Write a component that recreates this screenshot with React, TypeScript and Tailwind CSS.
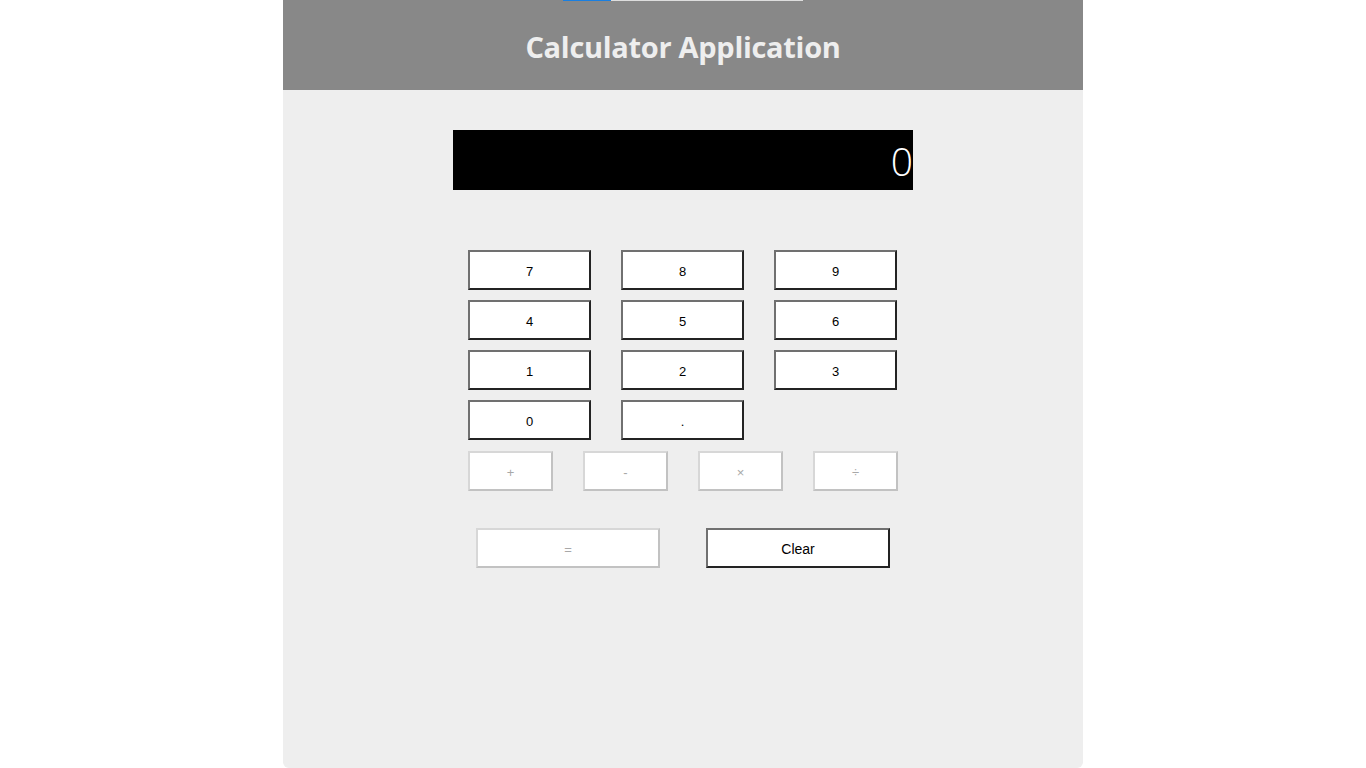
const digitRows = [
  ["7", "8", "9"],
  ["4", "5", "6"],
  ["1", "2", "3"],
  ["0", "."],
];

const operators = ["+", "-", "×", "÷"];

const btnOn =
  "h-10 pt-[3px] bg-white border-2 border-t-[#707070] border-l-[#707070] border-r-[#232323] border-b-[#232323] text-[13px] text-black";
const btnOff =
  "h-10 pt-[3px] bg-white border-2 border-t-[#d7d7d7] border-l-[#d7d7d7] border-r-[#c2c2c2] border-b-[#c2c2c2] text-[13px] text-[#a8a8a8]";

export default function App() {
  return (
    <div className="min-h-screen bg-white font-['Liberation_Sans',Arial,sans-serif]">
      <div className="mx-auto flex min-h-screen w-[800px] flex-col rounded-b-md bg-[#eeeeee]">
        <header className="relative flex h-[90px] items-center justify-center bg-[#888888] pt-1">
          <div className="absolute left-[280px] top-0 flex h-px w-[240px] bg-[#dddddd]">
            <div className="h-px w-[48px] bg-[#1a7fe0]" />
          </div>
          <h1 className="font-['Open_Sans',sans-serif] text-[29px] font-bold tracking-[-0.3px] text-[#eeeeee]">
            Calculator Application
          </h1>
        </header>

        <div className="flex flex-col items-center pt-10">
          <div className="flex h-[60px] w-[460px] items-center justify-end overflow-hidden bg-black">
            <span className="font-['Open_Sans',sans-serif] text-[39px] font-light leading-none text-white">
              0
            </span>
          </div>

          <div className="mt-[60px] flex w-[430px] flex-col gap-[10px]">
            {digitRows.map((row, i) => (
              <div key={i} className="grid grid-cols-[123px_123px_123px] gap-x-[30px]">
                {row.map((d) => (
                  <button key={d} className={btnOn}>
                    {d}
                  </button>
                ))}
              </div>
            ))}
          </div>

          <div className="mt-[11px] grid w-[430px] grid-cols-4 gap-[30px]">
            {operators.map((op) => (
              <button key={op} disabled className={btnOff}>
                {op}
              </button>
            ))}
          </div>

          <div className="mt-[37px] flex gap-[46px]">
            <button disabled className={`${btnOff} w-[184px]`}>
              =
            </button>
            <button className={`${btnOn} w-[184px] text-[14px]`}>Clear</button>
          </div>
        </div>
      </div>
    </div>
  );
}
